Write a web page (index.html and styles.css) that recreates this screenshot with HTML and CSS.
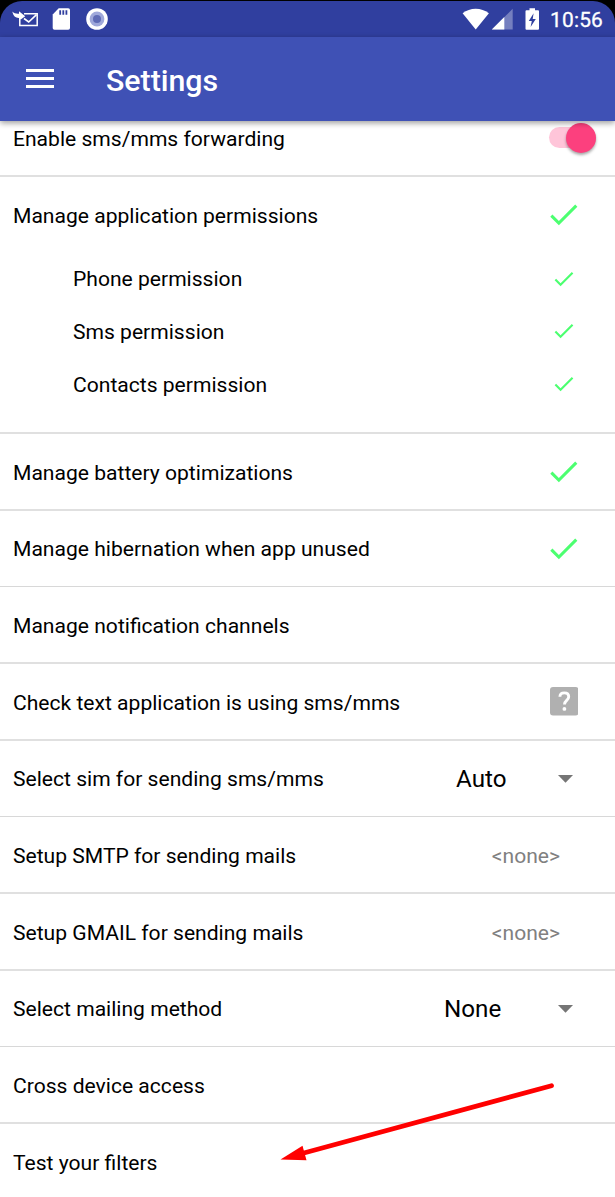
FILE: index.html
```html
<!DOCTYPE html>
<html lang="en">
<head>
<meta charset="utf-8">
<title>Settings</title>
<link rel="stylesheet" href="styles.css">
</head>
<body>
<svg class="defs" width="0" height="0">
  <symbol id="check" viewBox="0 0 24 24"><path d="M9 16.17L4.83 12l-1.42 1.41L9 19 21 7l-1.41-1.41z"/></symbol>
  <symbol id="caret" viewBox="0 0 15 8"><path d="M0 0h15L7.5 7.7z"/></symbol>
</svg>
<div class="screen">
  <div class="status-frame">
    <div class="status-bar">
      <svg class="status-icons" width="110" height="36" viewBox="0 1 110 36">
        <path d="M24 13.700H37.200V25.600H19.800V20" fill="none" stroke="#fff" stroke-width="1.500"/>
        <path d="M24 18.500l4.700 3.500 7.800-7.400" fill="none" stroke="#fff" stroke-width="1.600"/>
        <path d="M12.300 11.600c1.600 1.800 3.800 2.400 6.700 2.200v-2.600l6.200 5-6.200 4.500v-2.700c-3.500.1-5.600-1.700-6.700-6.400z" fill="#fff"/>
        <path d="M58.700 8.300H68.200a1.800 1.800 0 0 1 1.800 1.800V28a1.800 1.800 0 0 1-1.800 1.800H54.500a1.800 1.800 0 0 1-1.800-1.800V14.500z" fill="#fff"/>
        <path d="M59.300 10.300h1.800v4.500h-1.800zM62.400 10.300h1.800v4.500h-1.800zM65.500 10.300h1.800v4.500h-1.800z" fill="#303f9f"/>
        <circle cx="97" cy="19" r="10.800" fill="#fff"/>
        <circle cx="97" cy="19" r="7.400" fill="#9fa8da"/>
        <circle cx="97" cy="19" r="4" fill="#5f6bb5"/>
      </svg>
      <div class="status-right">
        <svg width="80" height="36" viewBox="462 1 80 36">
          <path d="M475.700 29.500L462.600 13.200Q468.400 8.700 475.700 8.700T488.900 13.200z" fill="#fff"/>
          <path d="M512.700 8.700V29.600H491.800z" fill="#757fbf"/>
          <path d="M504.300 17.100V29.600H491.800z" fill="#fff"/>
          <path d="M529.500 8.200h5.500v2h3a1 1 0 0 1 1 1v17.500a1 1 0 0 1-1 1h-11.500a1 1 0 0 1-1-1V11.200a1 1 0 0 1 1-1h3z" fill="#fff"/>
          <path d="M533.600 13.300l-4.800 7.600h3l-1.200 6 5.200-8h-3.100z" fill="#303f9f"/>
        </svg>
        <span class="clock">10:56</span>
      </div>
    </div>
  </div>
  <header class="app-bar">
    <div class="menu"><i></i><i></i><i></i></div>
    <h1 class="title">Settings</h1>
  </header>
  <main class="list">
    <div class="row row-first">
      <span>Enable sms/mms forwarding</span>
      <span class="toggle"><span class="knob"></span></span>
    </div>
    <section class="group">
      <div class="row row-head"><span>Manage application permissions</span><svg class="check"><use href="#check"/></svg></div>
      <div class="sub"><span>Phone permission</span><svg class="check-small"><use href="#check"/></svg></div>
      <div class="sub"><span>Sms permission</span><svg class="check-small"><use href="#check"/></svg></div>
      <div class="sub"><span>Contacts permission</span><svg class="check-small"><use href="#check"/></svg></div>
    </section>
    <div class="row"><span>Manage battery optimizations</span><svg class="check"><use href="#check"/></svg></div>
    <div class="row thin"><span>Manage hibernation when app unused</span><svg class="check"><use href="#check"/></svg></div>
    <div class="row"><span>Manage notification channels</span></div>
    <div class="row"><span>Check text application is using sms/mms</span>
      <svg class="help" viewBox="0 0 28.500 28.500">
        <rect width="28.500" height="28.500" rx="3" fill="#b0b0b0"/>
        <path d="M9.900 9.700C10 7.300 11.800 5.900 14.300 5.900c2.600 0 4.400 1.400 4.400 3.900 0 3.600-4.200 3.700-4.200 7.700" fill="none" stroke="#fff" stroke-width="2.900"/>
        <circle cx="14.400" cy="21.900" r="1.900" fill="#fff"/>
      </svg>
    </div>
    <div class="row thin"><span>Select sim for sending sms/mms</span>
      <span class="spinner spinner-auto">Auto<svg class="caret"><use href="#caret"/></svg></span></div>
    <div class="row"><span>Setup SMTP for sending mails</span><span class="value">&lt;none&gt;</span></div>
    <div class="row"><span>Setup GMAIL for sending mails</span><span class="value">&lt;none&gt;</span></div>
    <div class="row thin"><span>Select mailing method</span>
      <span class="spinner spinner-none">None<svg class="caret"><use href="#caret"/></svg></span></div>
    <div class="row"><span>Cross device access</span></div>
    <div class="row row-last"><span>Test your filters</span></div>
  </main>
  <svg class="arrow" width="280" height="84" viewBox="278 1080 280 84">
    <path d="M551.500 1085.700L302 1153.500" stroke="#f00" stroke-width="4.800" stroke-linecap="round"/>
    <path d="M280.500 1159.600L302.500 1145.800L306.500 1160.200z" fill="#f00"/>
  </svg>
</div>
</body>
</html>
```
FILE: styles.css
```css
* { box-sizing: border-box; }
body {
  margin: 0;
  background: #fff;
  font-family: Roboto, sans-serif;
  font-size: 21.08px;
  color: #000;
}
.defs { position: absolute; }
.screen {
  position: relative;
  width: 615px;
  height: 1197px;
  overflow: hidden;
  display: flex;
  flex-direction: column;
}
.status-frame {
  flex: none;
  position: relative;
  z-index: 2;
  height: 37px;
  padding-top: 1px;
  background: #000;
}
.status-bar {
  height: 36px;
  display: flex;
  justify-content: space-between;
  background: #303f9f;
  border-radius: 22px 22px 0 0;
  color: #fff;
}
.status-right { display: flex; align-items: center; padding-right: 11px; }
.clock { width: 54px; margin-left: 8px; font-size: 20.9px; letter-spacing: .2px; line-height: 36px; white-space: nowrap; padding-top: 1px; -webkit-text-stroke: .3px #fff; }
.app-bar {
  flex: none;
  position: relative;
  z-index: 2;
  height: 84px;
  display: flex;
  align-items: center;
  padding: 2px 0 0 26px;
  background: #3f51b5;
  color: #fff;
  box-shadow: 0 2px 6px rgba(0, 0, 0, .4);
}
.menu { width: 28px; display: flex; flex-direction: column; gap: 5px; margin-top: -3px; }
.menu i { height: 3.2px; background: #fff; }
.title { margin: 1px 0 0 52px; font-size: 30.3px; font-weight: 500; line-height: 36px; }
.list { flex: none; margin-top: -21px; }
.row {
  height: 77px;
  display: flex;
  align-items: center;
  justify-content: space-between;
  padding: 1px 33.500px 0 13px;
  border-bottom: 2px solid #e0e0e0;
  white-space: nowrap;
}
.thin { height: 76px; padding-top: 0; border-bottom: 1px solid #d8d8d8; }
.row-first { padding: 1px 19px 0 13px; }
.row-head { border: 0; height: 76px; padding-top: 0; }
.row-last { border: 0; padding-top: 0; }
.group { height: 257px; border-bottom: 2px solid #e0e0e0; }
.sub {
  height: 52.67px;
  display: flex;
  align-items: center;
  justify-content: space-between;
  padding: 0 38.500px 0 73px;
}
.sub span { margin-top: -1px; }
.check { width: 37px; height: 37px; margin-top: -1px; fill: #4cff70; }
.thin .check { margin-top: 0; }
.check-small { width: 25.5px; height: 25.5px; margin-top: -2px; fill: #4cff70; }
.help { width: 28.5px; height: 28.5px; margin: -1px 3.5px 0 0; }
.toggle {
  width: 47px;
  height: 21px;
  border-radius: 11px;
  background: #ffc5d9;
  display: flex;
  justify-content: flex-end;
  align-items: center;
  margin-top: -1px;
}
.knob {
  width: 30px;
  height: 30px;
  border-radius: 50%;
  background: #fc407e;
  box-shadow: 0 2px 3px rgba(0, 0, 0, .35);
}
.spinner {
  display: flex;
  align-items: center;
  justify-content: space-between;
  font-size: 24.2px;
  margin: 0 8.5px 0 0;
}
.spinner-auto { width: 117px; }
.spinner-none { width: 129px; }
.caret { width: 15px; height: 8px; fill: #757575; }
.value { color: #808080; margin-right: 21.5px; }
.arrow { position: absolute; left: 278px; top: 1080px; z-index: 3; }
```
